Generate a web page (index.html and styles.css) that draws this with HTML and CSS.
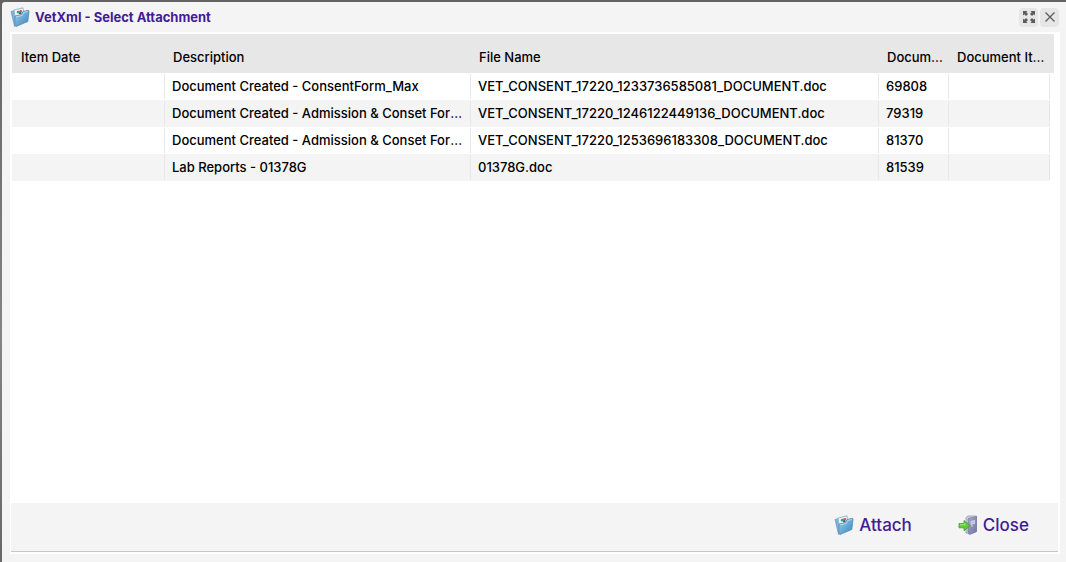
FILE: index.html
```
<!DOCTYPE html>
<html lang="en">
<head>
<meta charset="utf-8">
<title>VetXml - Select Attachment</title>
<link rel="stylesheet" href="styles.css">
</head>
<body>
<svg class="defs" aria-hidden="true">
  <defs>
    <linearGradient id="blue" x1="0" y1="0" x2="1" y2="1">
      <stop offset="0" stop-color="#a5cfe9"/><stop offset=".5" stop-color="#69a9d4"/><stop offset="1" stop-color="#4184b8"/>
    </linearGradient>
    <linearGradient id="door" x1="0" y1="0" x2="1" y2="1">
      <stop offset="0" stop-color="#a5a8ca"/><stop offset="1" stop-color="#7277a2"/>
    </linearGradient>
    <symbol id="folder" viewBox="0 0 20 20">
      <path d="M1 4.500 4.500 3.500 7 18l-2.500 1.500z" fill="#7fb2d6" stroke="#5b93b8" stroke-width=".6"/>
      <path d="M4 3 13 .8l1.500 11-9 3z" fill="#e9f3f8" stroke="#7faecb" stroke-width=".8"/>
      <circle cx="8.200" cy="5.200" r="1.400" fill="#39a957"/>
      <circle cx="10.700" cy="4.200" r="1.300" fill="#e64732"/>
      <circle cx="10.300" cy="6.200" r="1.200" fill="#355dae"/>
      <path d="M5 9 11.500 7.500l1.500-3 5.500-1.200.5 1-1.200 10.200L6 19.500 4.800 18z" fill="url(#blue)" stroke="#4f8db6" stroke-width=".8"/>
      <path d="M6 10 12.300 8.400l1.500-3 4-.9" fill="none" stroke="#c5e3f3" stroke-width=".8"/>
    </symbol>
    <symbol id="exit" viewBox="0 0 20 20">
      <path d="M8 2.500 10 1h8.500v15.500L15 18H8z" fill="#d2d3dc" stroke="#9a9bac" stroke-width=".8"/>
      <path d="M10 3.500 18.500 1.500v15L12 19.500l-2-1z" fill="url(#door)" stroke="#7377a0" stroke-width=".6"/>
      <path d="M13 6.500 16.500 5.500v3L13 9.500zM13 11h2" fill="#b9bddb" stroke="#dcdeee" stroke-width=".8"/>
      <path d="M1 8.500h5V5.500l6 5.200-6 5.100v-3H1z" fill="#62cc35" stroke="#45992e" stroke-width=".8"/>
      <path d="M2 9.700h5V8" fill="none" stroke="#a8eb7d"/>
    </symbol>
  </defs>
</svg>
<main class="dialog">
  <header class="titlebar">
    <svg class="icon"><use href="#folder"/></svg>
    <h1 class="title">VetXml - Select Attachment</h1>
    <button class="tool" type="button" aria-label="Maximise">
      <svg viewBox="0 0 12 12"><path d="M0 0h4.500L3.300 1.200 5 3 3 5 1.200 3.300 0 4.500zM12 0v4.500L10.800 3.300 9 5 7 3l1.700-1.800L7.500 0zM0 12V7.500l1.200 1.200L3 7l2 2-1.700 1.800L4.500 12zM12 12H7.500l1.200-1.200L7 9l2-2 1.800 1.700L12 7.500z" fill="#5c5c5c"/></svg>
    </button>
    <button class="tool" type="button" aria-label="Close dialog">
      <svg viewBox="0 0 12 12"><path d="M1.500 1.500l9 9M10.500 1.500l-9 9" stroke="#5c5c5c" stroke-width="1.300"/></svg>
    </button>
  </header>
  <section class="panel">
    <div class="list">
      <table class="grid">
        <colgroup><col class="c-date"><col class="c-desc"><col><col class="c-doc"><col class="c-item"><col class="c-end"></colgroup>
        <thead>
          <tr><th>Item Date</th><th>Description</th><th>File Name</th><th>Document Id</th><th colspan="2">Document Item Id</th></tr>
        </thead>
        <tbody>
          <tr><td></td><td>Document Created - ConsentForm_Max</td><td>VET_CONSENT_17220_1233736585081_DOCUMENT.doc</td><td>69808</td><td></td></tr>
          <tr><td></td><td>Document Created - Admission &amp; Conset Form_Max</td><td>VET_CONSENT_17220_1246122449136_DOCUMENT.doc</td><td>79319</td><td></td></tr>
          <tr><td></td><td>Document Created - Admission &amp; Conset Form_Max</td><td>VET_CONSENT_17220_1253696183308_DOCUMENT.doc</td><td>81370</td><td></td></tr>
          <tr><td></td><td>Lab Reports - 01378G</td><td>01378G.doc</td><td>81539</td><td></td></tr>
        </tbody>
      </table>
    </div>
    <footer class="actions">
      <button class="action" type="button"><svg class="icon"><use href="#folder"/></svg>Attach</button>
      <button class="action" type="button"><svg class="icon"><use href="#exit"/></svg>Close</button>
    </footer>
  </section>
</main>
</body>
</html>
```
FILE: styles.css
```
* { box-sizing: border-box; }
body {
  margin: 0;
  min-height: 100vh;
  display: flex;
  padding: 2px 0 0 2px;
  background: linear-gradient(#646262, #858383 60%, #686868);
  font: 500 13px/18px Inter, "Liberation Sans", sans-serif;
  color: #000;
}
.defs { position: absolute; width: 0; height: 0; }
.dialog {
  flex: 1;
  min-width: 0;
  display: flex;
  flex-direction: column;
  padding: 0 6px 8px 8px;
  background: #f4f4f4;
  border-radius: 3px 0 0 0;
}
.titlebar { display: flex; align-items: center; gap: 2px; height: 30px; padding-right: 1px; }
.title { flex: 1; margin: 0 0 0 3px; font-size: 13px; line-height: 18px; font-weight: 700; color: #431c93; }
.icon { width: 20px; height: 20px; flex: none; }
.tool {
  display: grid;
  place-items: center;
  width: 19px;
  height: 19px;
  padding: 0;
  border: 0;
  border-radius: 4px;
  background: #e6e6e6;
}
.tool svg { width: 12px; height: 12px; }
.panel { flex: 1; display: flex; flex-direction: column; padding: 2px 2px 2px 1px; background: #fff; }
.list { flex: 1; padding: 0 4px 0 1px; }
.grid { width: 100%; table-layout: fixed; border-collapse: collapse; }
.c-date { width: 153px; }
.c-desc { width: 306px; }
.c-doc { width: 70px; }
.c-item { width: 101px; }
.c-end { width: 4px; }
.grid th, .grid td { text-align: left; overflow: hidden; text-overflow: ellipsis; white-space: nowrap; }
.grid th { height: 39px; padding: 6px 4px 0 8px; background: #e7e7e7; font-weight: 500; }
.grid th:first-child { padding-left: 9px; }
.grid th:last-child { padding-right: 8px; }
.grid td {
  height: 27px;
  padding: 0 4px 2px 7px;
  background: linear-gradient(#e8e8e8, #e8e8e8) right center / 1px 25px no-repeat;
}
.grid tbody tr:nth-child(even) td { background-color: #f4f4f4; }
.actions {
  display: flex;
  justify-content: flex-end;
  gap: 46px;
  padding: 10px 29px 14px;
  background: #f4f4f4;
  border-bottom: 1px solid #c7c7c7;
}
.action {
  display: flex;
  align-items: center;
  gap: 5px;
  padding: 0;
  border: 0;
  background: none;
  font: inherit;
  font-size: 17px;
  line-height: 24px;
  color: #431c93;
}
```
